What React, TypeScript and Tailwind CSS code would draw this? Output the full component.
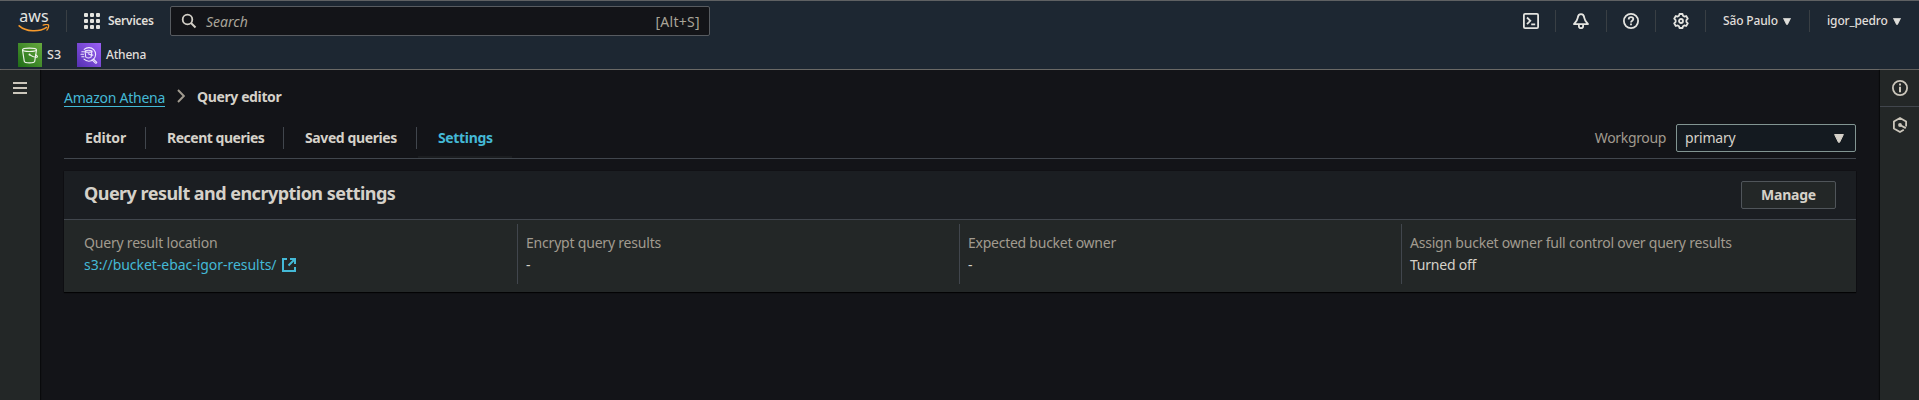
import type { ReactNode } from "react";

function AwsLogo() {
  return (
    <div className="flex h-[22px] w-8 flex-col items-center">
      <span className="h-[13px] text-[16px] leading-[10px] tracking-[0.100px] text-[#e4e4e0]">aws</span>
      <svg className="h-[9px] w-8" viewBox="0 0 32 9" fill="none">
        <path d="M1.2 1.8C8 7.8 21 8.4 28.6 3.4" stroke="#f79a2c" strokeWidth="1.7" strokeLinecap="round" />
        <path d="M25.2 1.2c2.2-.8 4.8-.8 5.3-.1.5.8-.2 3.500-1.600 5" stroke="#f79a2c" strokeWidth="1.300" strokeLinecap="round" />
      </svg>
    </div>
  );
}

function GridIcon() {
  return (
    <div className="grid grid-cols-[4px_4px_4px] gap-[2px]">
      {Array.from({ length: 9 }, (_, i) => (
        <span key={i} className="h-1 w-1 rounded-[1px] bg-[#e4e4e0]" />
      ))}
    </div>
  );
}

function S3Icon() {
  return (
    <svg className="h-6 w-6" viewBox="0 0 24 24" fill="none">
      <defs>
        <linearGradient id="s3" x1="0" y1="1" x2="1" y2="0">
          <stop offset="0" stopColor="#1f6d17" />
          <stop offset="1" stopColor="#67aa3e" />
        </linearGradient>
      </defs>
      <rect width="24" height="24" fill="url(#s3)" />
      <g stroke="#eef3ea" strokeWidth="1.150" strokeLinejoin="round">
        <ellipse cx="11.500" cy="6.800" rx="7" ry="1.700" />
        <path d="M4.500 7l1.800 11.300c.3 2 10.100 2 10.400 0L18.500 7" />
        <path d="M11.500 11.700c3 1.800 6.600 3 7.700 2.300.7-.6-.5-1.500-2-2.400" />
      </g>
      <circle cx="11.500" cy="11.600" r="1" fill="#eef3ea" />
    </svg>
  );
}

function AthenaIcon() {
  return (
    <svg className="h-6 w-6" viewBox="0 0 24 24" fill="none">
      <defs>
        <linearGradient id="athena" x1="0" y1="1" x2="1" y2="0">
          <stop offset="0" stopColor="#5430b2" />
          <stop offset="1" stopColor="#9c60f6" />
        </linearGradient>
      </defs>
      <rect width="24" height="24" fill="url(#athena)" />
      <g stroke="#f0eaff" strokeWidth="1.100" strokeLinecap="round" strokeLinejoin="round">
        <path d="M7.200 6.400A6.800 6.800 0 1 1 7 16.200" />
        <path d="M16.300 16l3.500 3.300c-.1.700-.6 1-1.100 1L15 16.900" />
        <ellipse cx="11.500" cy="8.300" rx="3.500" ry="1" />
        <path d="M8 8.500l.8 5.700c.3 1 5 1 5.300 0l.8-5.700M11.300 10.800c1.800 1 3.600 1.600 4.600 1.200" />
        <path d="M4.800 8.800h1.700M4 11.300h2.500M4.800 13.800H7" />
      </g>
    </svg>
  );
}

function Stroke({ children, size = "h-4 w-4", color = "text-[#e4e4e0]" }: { children: ReactNode; size?: string; color?: string }) {
  return (
    <svg className={`${size} ${color} shrink-0`} viewBox="0 0 16 16" fill="none" stroke="currentColor" strokeWidth="1.800">
      {children}
    </svg>
  );
}

function Caret({ className }: { className: string }) {
  return (
    <svg className={className} viewBox="0 0 10 9" preserveAspectRatio="none">
      <path d="M.6.500h8.800L5.600 8.300H4.400z" fill="currentColor" stroke="currentColor" strokeLinejoin="round" />
    </svg>
  );
}

const Divider = () => <span className="h-[22px] w-px shrink-0 bg-[#393f44]" />;

function Header() {
  return (
    <header className="h-[70px] border-t border-b border-t-[#5f6163] border-b-[#6a6966] bg-[#1d2732] text-[#e0dfdb]">
      <div className="flex h-10 items-center">
        <div className="ml-[18px] flex w-12 items-center pt-px">
          <AwsLogo />
        </div>
        <Divider />
        <div className="ml-[17px] flex w-[86px] items-center gap-2">
          <GridIcon />
          <span className="text-[12px] font-semibold tracking-[-0.250px]">Services</span>
        </div>
        <div className="flex h-[30px] w-[540px] items-center rounded-[2px] border border-[#575b60] bg-[#131418] pr-[9px] pl-[10px] text-[14px] text-[#a9a498]">
          <Stroke color="text-[#d3cfc7]">
            <circle cx="6.500" cy="6.500" r="4.800" />
            <path d="M10 10l4.500 4.500" strokeWidth="2" />
          </Stroke>
          <span className="ml-[9px] italic">Search</span>
          <span className="ml-auto tracking-[0.300px]">[Alt+S]</span>
        </div>
        <div className="ml-auto flex items-center">
          <span className="mr-4">
            <Stroke>
              <rect x="0.900" y="0.900" width="14.200" height="14.200" rx="1.200" />
              <path d="M4 4.500L7.300 7.800 4 11.100M8.200 11.300h4" />
            </Stroke>
          </span>
          <Divider />
          <span className="mx-[17px]">
            <Stroke>
              <path d="M8 1.200C5.800 1.200 5 2.600 4.700 4.800 4.400 7.200 3 8.600 1 11.100h14C13 8.600 11.600 7.200 11.300 4.800 11 2.600 10.200 1.200 8 1.200z" strokeLinejoin="round" />
              <path d="M5.900 11.500v1.700c0 1.100.9 1.900 2.100 1.900s2.100-.8 2.100-1.900v-1.700" />
            </Stroke>
          </span>
          <Divider />
          <span className="mx-4">
            <Stroke>
              <circle cx="8" cy="8" r="7.100" />
              <path d="M5.700 6.400C5.700 5 6.700 4.100 8 4.100s2.300.8 2.300 2c0 1.500-2.300 1.700-2.300 3.400" />
              <path d="M8 10.600v1.700" />
            </Stroke>
          </span>
          <Divider />
          <span className="mr-4 ml-[17px]">
            <Stroke>
              <path d="M6.500 1h3l.5 1.800 1.300.8 1.900-.6 1.600 2.700L13.400 7.100v1.800l1.400 1.400-1.600 2.700-1.900-.6-1.300.8L9.500 15h-3L6 13.200l-1.300-.8-1.900.6-1.600-2.700L2.600 8.900V7.100L1.200 5.700 2.800 3l1.900.6L6 2.800z" strokeLinejoin="round" />
              <circle cx="8" cy="8" r="2" />
            </Stroke>
          </span>
          <Divider />
          <div className="flex w-[103px] items-center pl-[17px] text-[12px] font-medium">
            <span className="tracking-[-0.150px]">São Paulo</span>
            <Caret className="ml-[5px] h-[7px] w-2" />
          </div>
          <Divider />
          <div className="flex w-[109px] items-center pl-[17px] text-[12px] font-medium">
            <span className="tracking-[-0.150px]">igor_pedro</span>
            <Caret className="ml-[5px] h-[7px] w-2" />
          </div>
        </div>
      </div>
      <div className="flex h-[28px] items-center pl-[18px] text-[12px] font-medium">
        <S3Icon />
        <span className="ml-[5px] w-[30px] text-[12.5px]">S3</span>
        <AthenaIcon />
        <span className="ml-[5px] tracking-[-0.200px]">Athena</span>
      </div>
    </header>
  );
}

const tabs = [
  { label: "Editor", box: "w-[82px]", text: "tracking-[-0.150px]" },
  { label: "Recent queries", box: "w-[138px]", text: "tracking-[-0.480px]" },
  { label: "Saved queries", box: "w-[133px]", text: "tracking-[-0.400px]" },
];

const fields = [
  { label: "Encrypt query results", value: "-", text: "tracking-[-0.200px]" },
  { label: "Expected bucket owner", value: "-", text: "tracking-[-0.250px]" },
  { label: "Assign bucket owner full control over query results", value: "Turned off", text: "tracking-[-0.220px]" },
];

export default function App() {
  return (
    <div className="flex h-[400px] w-[1919px] flex-col overflow-hidden bg-[#131418] font-['Noto_Sans','Open_Sans',sans-serif] whitespace-nowrap text-[#d5d1c9]">
      <Header />
      <div className="flex min-h-0 flex-1">
        <aside className="w-10 shrink-0 bg-[#232727] pt-3 pl-[13px] shadow-[1px_0_1px_rgba(0,0,0,0.5)]">
          <div className="flex w-[14px] flex-col gap-[3px]">
            <span className="h-[2px] bg-[#cbc6bb]" />
            <span className="h-[2px] bg-[#cbc6bb]" />
            <span className="h-[2px] bg-[#cbc6bb]" />
          </div>
        </aside>

        <main className="flex-1 px-6 pt-[15px] text-[14px] leading-[22px]">
          <nav className="flex h-[22px] items-center">
            <a className="flex h-[22px] w-[101px] border-b border-[#44b9d6] leading-[25px] tracking-[-0.250px] text-[#44b9d6]">Amazon Athena</a>
            <svg className="ml-3 h-[14px] w-2" viewBox="0 0 8 14" fill="none">
              <path d="M1 1l5.800 6L1 13" stroke="#a19b8f" strokeWidth="1.900" />
            </svg>
            <span className="ml-3 pt-[2px] font-bold tracking-[-0.380px]">Query editor</span>
          </nav>

          <div className="mt-[11px] flex h-[41px] border-b border-[#41464d] font-bold">
            {tabs.map((t) => (
              <div key={t.label} className={`${t.box} flex h-[40px] items-center pl-[21px]`}>
                <span className={`${t.text} flex-1`}>{t.label}</span>
                <span className="h-[22px] w-px bg-[#41464d]" />
              </div>
            ))}
            <div className="ml-px flex h-[40px] w-[94px] items-center border-b-2 border-[#1b1d20] pt-[2px] pl-5 text-[#44b9d6]">
              <span className="tracking-[-0.350px]">Settings</span>
            </div>
            <div className="ml-auto flex h-[40px] items-center font-normal">
              <span className="mr-[10px] tracking-[-0.350px] text-[#a19b8f]">Workgroup</span>
              <div className="flex h-[28px] w-[180px] items-center justify-between rounded-[2px] border border-[#829592] bg-[#141a20] pr-[11px] pl-2">
                <span className="tracking-[-0.200px]">primary</span>
                <Caret className="h-[9px] w-[10px]" />
              </div>
            </div>
          </div>

          <section className="mt-3 h-[121px] bg-[#232727] shadow-[0_1px_1px_rgba(0,0,0,0.8),0_0_1px_rgba(0,0,0,0.6)]">
            <div className="flex h-[49px] items-center justify-between border-b border-[#41464d] bg-[#1b1e22] pr-5 pl-5">
              <h2 className="pb-1 text-[18px] font-bold tracking-[-0.530px]">Query result and encryption settings</h2>
              <button className="h-[28px] w-[95px] rounded-[2px] border border-[#50555a] bg-[#232727] pb-px font-bold tracking-[-0.200px]">Manage</button>
            </div>
            <div className="flex h-[72px] pt-1">
              <div className="w-[453px] pt-2 pl-5">
                <div className="tracking-[-0.200px] text-[#a19b8f]">Query result location</div>
                <a className="flex items-center text-[#44b9d6]">
                  <span className="w-[194px] tracking-[-0.040px]">s3://bucket-ebac-igor-results/</span>
                  <svg className="ml-[4px] h-[14px] w-[14px]" viewBox="0 0 14 14" fill="none" stroke="currentColor" strokeWidth="2">
                    <path d="M5 1H1v12h12V9" />
                    <path d="M8 1h5v5M12.500 1.500L6.500 7.500" />
                  </svg>
                </a>
              </div>
              {fields.map((f) => (
                <div key={f.label} className="h-[60px] w-[442px] border-l border-[#41464d] pt-2 pl-2">
                  <div className={`${f.text} text-[#a19b8f]`}>{f.label}</div>
                  <div className="tracking-[-0.220px]">{f.value}</div>
                </div>
              ))}
            </div>
          </section>
        </main>

        <aside className="w-[39px] shrink-0 bg-[#232727] shadow-[-1px_0_1px_rgba(0,0,0,0.5)]">
          <div className="flex h-[37px] items-center border-b border-[#41464d] pl-3">
            <Stroke color="text-[#cbc6bb]">
              <circle cx="8" cy="8" r="7.100" />
              <path d="M8 3.500v2M8 6.800v5.500" strokeWidth="2" />
            </Stroke>
          </div>
          <div className="flex h-[36px] items-center pl-3">
            <Stroke color="text-[#cbc6bb]">
              <path d="M14.100 9.500V4.500L8 1 1.900 4.500v7L8 15l3.800-2.200" strokeLinejoin="round" />
              <circle cx="8" cy="8" r="1.900" fill="currentColor" stroke="none" />
              <path d="M8 8l5.800 3.200" strokeWidth="1.900" />
            </Stroke>
          </div>
        </aside>
      </div>
    </div>
  );
}
